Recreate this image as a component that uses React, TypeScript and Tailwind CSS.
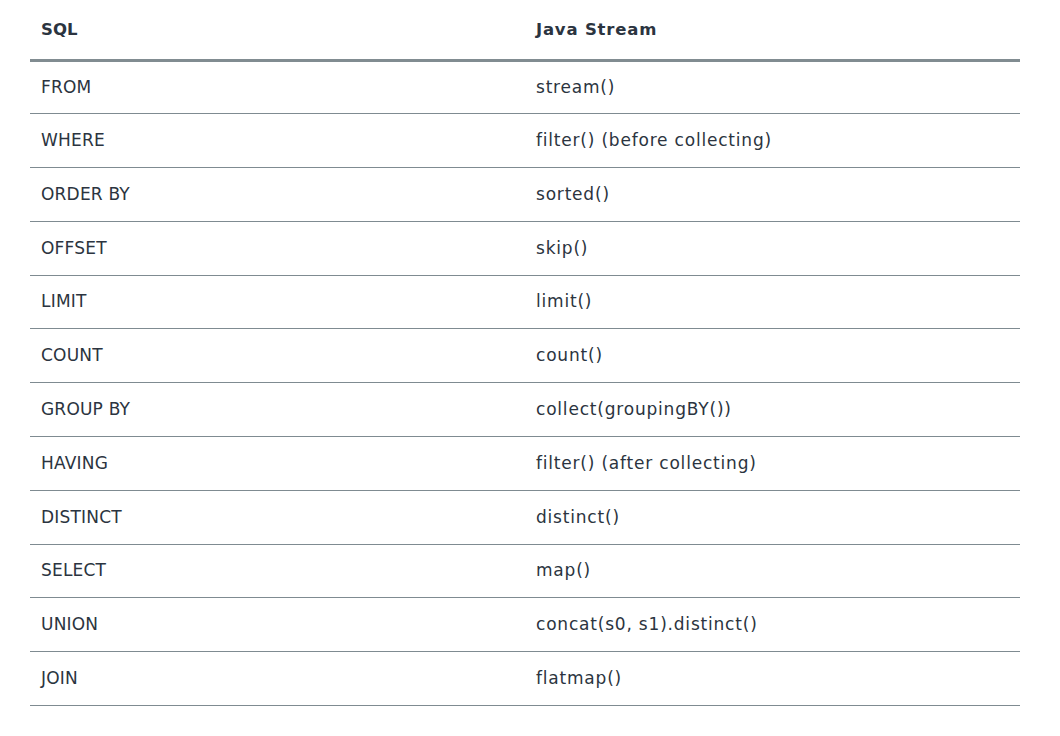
const rows = [
  ['FROM', 'stream()'],
  ['WHERE', 'filter() (before collecting)'],
  ['ORDER BY', 'sorted()'],
  ['OFFSET', 'skip()'],
  ['LIMIT', 'limit()'],
  ['COUNT', 'count()'],
  ['GROUP BY', 'collect(groupingBY())'],
  ['HAVING', 'filter() (after collecting)'],
  ['DISTINCT', 'distinct()'],
  ['SELECT', 'map()'],
  ['UNION', 'concat(s0, s1).distinct()'],
  ['JOIN', 'flatmap()'],
];

export default function App() {
  return (
    <div className="min-h-screen bg-white px-[30px] pt-0 text-[#2b3440] font-['DejaVu_Sans',sans-serif]">
      <table className="w-[990px] border-collapse text-[17px]">
        <thead>
          <tr className="h-[60px] border-b-[3px] border-[#818c91]">
            <th className="w-1/2 px-[11px] pt-[3px] pb-0 text-left font-bold text-[16.5px]">SQL</th>
            <th className="w-1/2 px-[11px] pt-[3px] pb-0 text-left font-bold text-[16.5px] tracking-[0.8px]">
              Java Stream
            </th>
          </tr>
        </thead>
        <tbody>
          {rows.map(([sql, java]) => (
            <tr key={sql} className="h-[53.8px] border-b border-[#7f8b91]">
              <td className="px-[11px] py-0 tracking-[0.2px]">{sql}</td>
              <td className="px-[11px] py-0 tracking-[0.8px]">{java}</td>
            </tr>
          ))}
        </tbody>
      </table>
    </div>
  );
}
